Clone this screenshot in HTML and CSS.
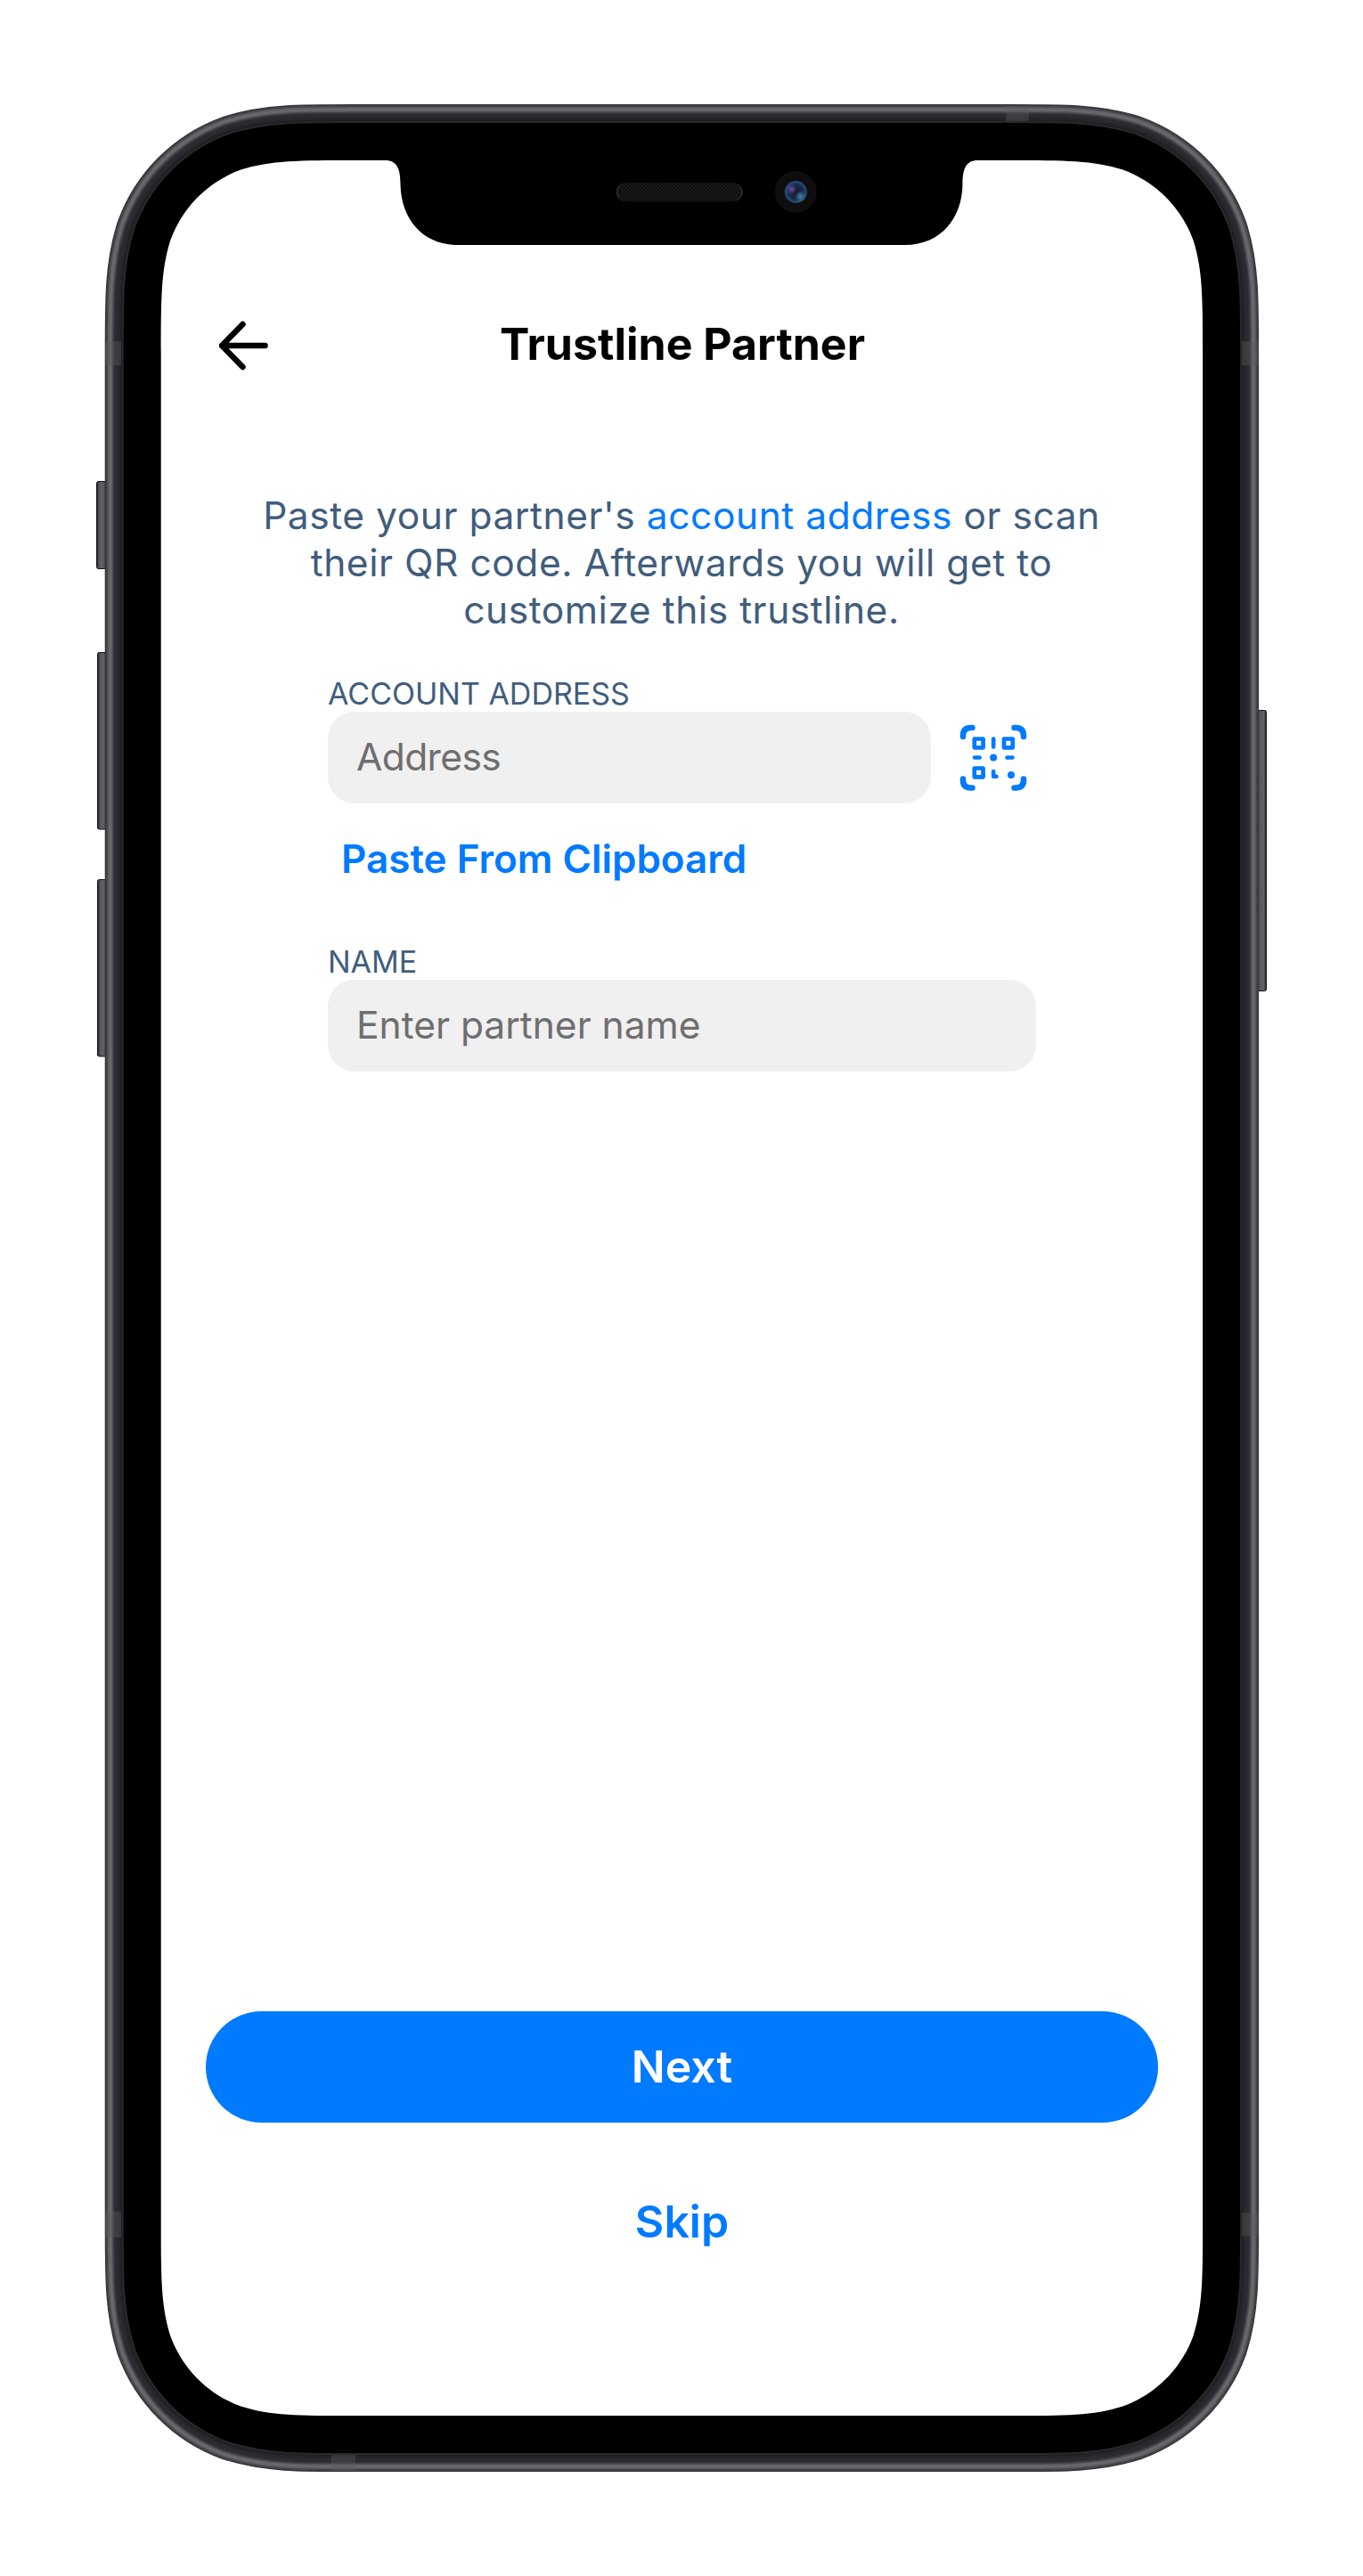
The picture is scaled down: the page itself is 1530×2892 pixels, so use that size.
FILE: index.html
```html
<!DOCTYPE html>
<html lang="en">
<head>
<meta charset="utf-8">
<title>Trustline Partner</title>
<link rel="stylesheet" href="styles.css">
</head>
<body>
<div class="stage">
  <svg class="device" viewBox="0 0 1530 2892" aria-hidden="true">
    <defs>
      <path id="screen" d="M180.700 397.100c0-62.500 0-93.800 10.600-127.400c13.400-36.800 42.300-65.700 79.100-79.100c33.600-10.600 64.900-10.600 127.400-10.600H1133c62.500 0 93.800 0 127.400 10.600c36.800 13.400 65.700 42.300 79.100 79.100c10.600 33.600 10.600 64.900 10.600 127.400V2495c0 62.500 0 93.800-10.600 127.400c-13.400 36.800-42.300 65.700-79.100 79.100c-33.600 10.600-64.900 10.600-127.400 10.600H397.800c-62.500 0-93.800 0-127.400-10.600c-36.800-13.400-65.700-42.300-79.100-79.100c-10.600-33.600-10.600-64.900-10.600-127.400Z"/>
      <linearGradient id="keyL"><stop offset="0" stop-color="#1d1d22"/><stop offset=".2" stop-color="#55555b"/><stop offset=".45" stop-color="#626267"/><stop offset=".7" stop-color="#47474c"/><stop offset="1" stop-color="#3a3a3f"/></linearGradient>
      <linearGradient id="keyR" x1="1" x2="0"><stop offset="0" stop-color="#1d1d22"/><stop offset=".2" stop-color="#626267"/><stop offset=".5" stop-color="#55555a"/><stop offset="1" stop-color="#3a3a3f"/></linearGradient>
      <pattern id="mesh" width="4" height="4" patternUnits="userSpaceOnUse"><rect width="4" height="4" fill="#0e0e0e"/><path d="M0 0h2v2H0zM2 2h2v2H2z" fill="#191919"/></pattern>
      <linearGradient id="rim"><stop offset="0" stop-color="#444"/><stop offset=".06" stop-color="#111"/><stop offset=".94" stop-color="#111"/><stop offset="1" stop-color="#444"/></linearGradient>
      <radialGradient id="lens"><stop offset="0" stop-color="#10182f"/><stop offset=".6" stop-color="#172848"/><stop offset="1" stop-color="#27507f"/></radialGradient>
      <radialGradient id="violet"><stop offset="0" stop-color="#6a4aa0"/><stop offset="1" stop-color="#6a4aa0" stop-opacity="0"/></radialGradient>
      <radialGradient id="cyan"><stop offset="0" stop-color="#4387a8"/><stop offset="1" stop-color="#4387a8" stop-opacity="0"/></radialGradient>
    </defs>
    <g fill="url(#keyL)" stroke="#17171c">
      <rect x="108.500" y="540.500" width="14" height="98" rx="2"/>
      <rect x="109.500" y="732.500" width="14" height="198.500" rx="2"/>
      <rect x="109.500" y="987.500" width="14" height="198.500" rx="2"/>
    </g>
    <rect x="1407" y="797.500" width="14.500" height="315" rx="2" fill="url(#keyR)" stroke="#17171c"/>
    <g fill="none">
      <use href="#screen" stroke="#38383b" stroke-width="126"/>
      <use href="#screen" stroke="#454549" stroke-width="123"/>
      <use href="#screen" stroke="#55555a" stroke-width="120"/>
      <use href="#screen" stroke="#626268" stroke-width="118"/>
      <use href="#screen" stroke="#67676c" stroke-width="116"/>
      <use href="#screen" stroke="#5b5b60" stroke-width="111"/>
      <use href="#screen" stroke="#48484d" stroke-width="109"/>
      <use href="#screen" stroke="#37373c" stroke-width="107"/>
      <use href="#screen" stroke="#2b2a31" stroke-width="104"/>
      <use href="#screen" stroke="#26252b" stroke-width="96"/>
      <use href="#screen" stroke="#1f1f22" stroke-width="91"/>
      <use href="#screen" stroke="#292928" stroke-width="88"/>
      <use href="#screen" stroke="#000" stroke-width="84"/>
    </g>
    <g fill="#5c5c5c" fill-opacity=".38">
      <path d="M118 383h18v27h-18zM1394 383h19v27h-19zM118 2483h18v29h-18zM1394 2484h19v26h-19zM1129 119h26v17h-26zM372 2756h27v18h-27z"/>
    </g>
    <use href="#screen" fill="#fff"/>
    <path d="M430 179.500C444 180 449.500 186 449.500 207C450 246 475 275 513 275H1016C1055 275 1080 246 1080.500 207C1080.500 186 1086 180 1100 179.500Z" fill="#000"/>
    <rect x="692.500" y="205.500" width="140.500" height="20.500" rx="10.250" fill="url(#mesh)" stroke="url(#rim)"/>
    <circle cx="893.300" cy="215.500" r="23.500" fill="#0e0e0e"/>
    <circle cx="893.300" cy="215.500" r="12.500" fill="url(#lens)"/>
    <circle cx="888.500" cy="212.500" r="6" fill="url(#violet)"/>
    <circle cx="898.500" cy="220.500" r="6.500" fill="url(#cyan)"/>
  </svg>
  <main class="app">
    <header class="topbar">
      <svg class="back" viewBox="0 0 56 56" role="img" aria-label="Back"><path d="M51.500 28H5M26.500 4L3 28L26.500 52"/></svg>
      <h1 class="title">Trustline Partner</h1>
    </header>
    <p class="intro">Paste your partner's <span class="link">account address</span> or scan<br>their QR code. Afterwards you will get to<br>customize this trustline.</p>
    <form class="form">
      <label class="label" for="address">ACCOUNT ADDRESS</label>
      <div class="row">
        <div class="field" id="address"><span class="hint tight">Address</span></div>
        <svg class="scan" viewBox="0 0 76 76" role="img" aria-label="Scan QR code">
          <g fill="none" stroke="#007aff" stroke-linecap="round" stroke-linejoin="round">
            <path stroke-width="6.500" d="M4 14V13Q4 4 13 4H14.500M61.500 4H63Q72 4 72 13V14M4 61.500V63Q4 71.500 13 71.500H14.500M61.500 71.500H63Q72 71.500 72 63V61.500"/>
            <path stroke-width="4.700" d="M16.800 16.500h9.800v9.800h-9.800zM50 16.500h9.800v9.800h-9.800zM16.800 49.500h9.800v9.800h-9.800z"/>
            <path stroke-width="4.600" d="M38.200 16.500V25.500M17 37.500H22.700M53.500 37.500H59.500M38.200 53V58.800H41.500"/>
          </g>
          <circle cx="38.200" cy="37.500" r="4" fill="#007aff"/><circle cx="58" cy="57" r="4" fill="#007aff"/>
        </svg>
      </div>
      <div class="paste">Paste From Clipboard</div>
      <label class="label" for="name">NAME</label>
      <div class="field" id="name"><span class="hint">Enter partner name</span></div>
    </form>
    <footer class="actions">
      <div class="next">Next</div>
      <div class="skip">Skip</div>
    </footer>
  </main>
</div>
</body>
</html>
```
FILE: styles.css
```css
* { box-sizing: border-box; }
body { margin: 0; background: #fff; font-family: Inter, sans-serif; }
.stage { position: relative; width: 1530px; height: 2892px; padding: 180px; }
.device { position: absolute; inset: 0; width: 1530px; height: 2892px; }
.app { position: relative; width: 1170px; height: 2532px; display: flex; flex-direction: column; }
.topbar { display: grid; grid-template-columns: 120px 1fr 120px; align-items: center; height: 80px; margin-top: 168px; }
.back { width: 56px; height: 56px; margin-left: 66px; fill: none; stroke: #000; stroke-width: 6.500px; stroke-linecap: round; stroke-linejoin: round; }
.title { margin: 0 0 4px 2px; text-align: center; font-size: 50px; line-height: 60px; font-weight: 700; white-space: nowrap; }
.intro { margin: 124px 0 0; text-align: center; font-size: 42.5px; line-height: 53px; letter-spacing: 0.55px; color: #415d7c; white-space: nowrap; }
.link { color: #007aff; }
.form { display: flex; flex-direction: column; width: 795px; margin: 48px 0 0 188px; }
.label { font-size: 34px; line-height: 40px; color: #415d7c; white-space: nowrap; }
.row { display: flex; align-items: center; gap: 32px; }
.field { flex: 1 1 auto; display: flex; align-items: center; height: 103px; padding: 0 0 2px 32px; border-radius: 30px; background: #f0f0f0; }
.hint { font-size: 42.5px; line-height: 54px; color: #6e6e6e; white-space: nowrap; }
.tight { letter-spacing: -0.6px; }
.scan { width: 76px; height: 76px; margin-right: 10px; }
.paste { margin: 35px 0 69px 15px; font-size: 44px; line-height: 54px; font-weight: 600; color: #007aff; white-space: nowrap; }
.actions { margin-top: auto; padding: 0 50px 188px 51px; text-align: center; font-size: 50px; line-height: 60px; font-weight: 600; }
.next { height: 125px; padding-top: 32px; border-radius: 63px; background: #007aff; color: #fff; }
.skip { margin-top: 81px; color: #007aff; }
```
